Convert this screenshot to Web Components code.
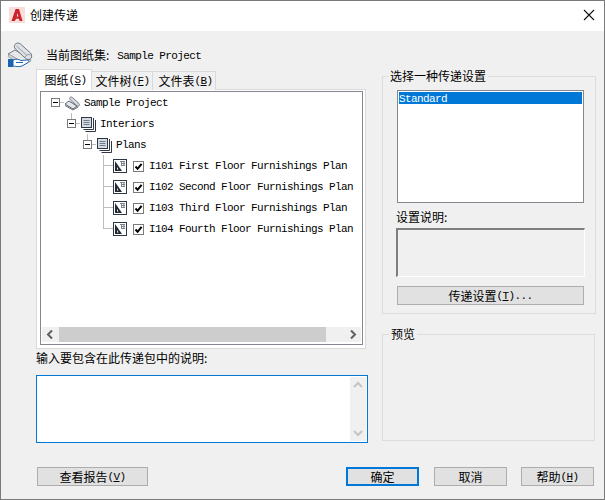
<!DOCTYPE html>
<html lang="zh">
<head>
<meta charset="utf-8">
<title>创建传递</title>
<style>
    html, body { margin: 0; padding: 0; background: #f0f0f0; }
    body { font: 12px/16px "Noto Sans CJK SC", "Liberation Sans", sans-serif; color: #000; }
</style>
</head>
<body>
<transmit-dialog>
    <title-bar slot="title">创建传递</title-bar>
    <sheet-header slot="header" set-name="Sample Project">当前图纸集:</sheet-header>

    <tab-strip slot="tabs">
        <tab-item active>图纸<mono-text>(<u>S</u>)</mono-text></tab-item>
        <tab-item style="width:62px;padding-left:1px">文件树<mono-text>(<u>F</u>)</mono-text></tab-item>
        <tab-item style="width:64px;padding-left:3px">文件表<mono-text>(<u>B</u>)</mono-text></tab-item>
    </tab-strip>

    <tree-view slot="tree">
        <tree-row depth="0" kind="set"><mono-text>Sample Project</mono-text></tree-row>
        <tree-row depth="1" kind="stack" branch><mono-text>Interiors</mono-text></tree-row>
        <tree-row depth="2" kind="stack" branch><mono-text>Plans</mono-text></tree-row>
        <tree-row leaf><mono-text>I101 First Floor Furnishings Plan</mono-text></tree-row>
        <tree-row leaf><mono-text>I102 Second Floor Furnishings Plan</mono-text></tree-row>
        <tree-row leaf><mono-text>I103 Third Floor Furnishings Plan</mono-text></tree-row>
        <tree-row leaf last><mono-text>I104 Fourth Floor Furnishings Plan</mono-text></tree-row>
    </tree-view>

    <notes-box slot="notes">输入要包含在此传递包中的说明:</notes-box>

    <group-box slot="settings" label="选择一种传递设置" style="height:246px;--legend-x:-9px">
        <setup-list><mono-text>Standard</mono-text></setup-list>
        <desc-box>设置说明:</desc-box>
        <win-button style="width:187px;margin-top:9px">传递设置<mono-text>(<u>T</u>)...</mono-text></win-button>
    </group-box>
    <group-box slot="preview" label="预览" style="height:115px;margin-top:12px;--legend-x:-8px"></group-box>

    <win-button slot="report" style="width:111px">查看报告<mono-text>(<u>V</u>)</mono-text></win-button>
    <win-button slot="ok" primary style="width:73px">确定</win-button>
    <win-button slot="cancel" style="width:73px;margin-left:15px">取消</win-button>
    <win-button slot="help" style="width:73px;margin-left:14px">帮助<mono-text>(<u>H</u>)</mono-text></win-button>
</transmit-dialog>

<script>
// Latin text in the dialog is a 6px per char mono face
class MonoText extends HTMLElement {
    constructor() {
        super();
        this.attachShadow({ mode: 'open' });
    }
    connectedCallback() {
        this.shadowRoot.innerHTML = `
            <style>
                :host { display: inline; font-family: "Liberation Mono", monospace; font-size: 11px; letter-spacing: -0.6px; }
            </style>
            <slot></slot>
        `;
    }
}
customElements.define('mono-text', MonoText);

class TransmitDialog extends HTMLElement {
    constructor() {
        super();
        this.attachShadow({ mode: 'open' });
    }
    connectedCallback() {
        this.shadowRoot.innerHTML = `
            <style>
                :host { display: block; box-sizing: border-box; width: 605px; height: 500px; border: 1px solid #7a7a7a; background: #f0f0f0; overflow: hidden; }
                .main { display: grid; grid-template-columns: 332px 213px; column-gap: 14px; padding-left: 35px; }
                .left { display: flex; flex-direction: column; }
                .footer { display: flex; margin-top: 24px; padding-left: 36px; }
                .spacer { flex: 1; }
                .footer-right { display: flex; margin-right: 10px; }
            </style>
            <slot name="title"></slot>
            <slot name="header"></slot>
            <div class="main">
                <div class="left">
                    <slot name="tabs"></slot>
                    <slot name="tree"></slot>
                    <slot name="notes"></slot>
                </div>
                <div class="right">
                    <slot name="settings"></slot>
                    <slot name="preview"></slot>
                </div>
            </div>
            <div class="footer">
                <slot name="report"></slot>
                <div class="spacer"></div>
                <div class="footer-right">
                    <slot name="ok"></slot>
                    <slot name="cancel"></slot>
                    <slot name="help"></slot>
                </div>
            </div>
        `;
    }
}
customElements.define('transmit-dialog', TransmitDialog);

class TitleBar extends HTMLElement {
    constructor() {
        super();
        this.attachShadow({ mode: 'open' });
    }
    connectedCallback() {
        this.shadowRoot.innerHTML = `
            <style>
                :host { display: flex; box-sizing: border-box; align-items: center; height: 30px; background: #fff; padding: 0 9px 2px 8px; }
                .logo { width: 16px; height: 16px; flex: none; }
                .text { margin-left: 5px; flex: 1; }
                .close { width: 12px; height: 12px; flex: none; }
            </style>
            <svg class="logo" viewBox="0 0 16 16">
                <rect width="16" height="16" fill="#fadcd8"/>
                <path d="M2.5 14 L6.6 2 H10 L13.5 14 H10.6 L10 11.8 H6.9 L6 14 Z M7.7 9.4 H9.4 L8.6 6 Z" fill="#c8232f" fill-rule="evenodd"/>
            </svg>
            <div class="text"><slot></slot></div>
            <svg class="close" viewBox="0 0 12 12"><path d="M1 1 L11 11 M11 1 L1 11" stroke="#111" stroke-width="1.1" fill="none"/></svg>
        `;
    }
}
customElements.define('title-bar', TitleBar);

class SheetHeader extends HTMLElement {
    constructor() {
        super();
        this.attachShadow({ mode: 'open' });
    }
    connectedCallback() {
        this.shadowRoot.innerHTML = `
            <style>
                :host { display: flex; align-items: center; height: 26px; padding: 11px 0 0 6px; }
                svg { width: 26px; height: 26px; flex: none; margin-right: 13px; }
                .name { width: 180px; margin-left: 8px; white-space: nowrap; }
            </style>
            <svg viewBox="0 0 26 26">
                <path d="M1 12 L8 8 L23 17 L16 21 Z" fill="#e8e8e8" stroke="#6f7680"/>
                <path d="M1 14.5 L2 12 L16 20.5 L23 17 L24 19 L15 23.5 L9 20 Z" fill="#c9ced4" stroke="#8a9099" stroke-width=".7"/>
                <path d="M8 2.5 C9.5 .5 12 .8 13.5 2 L23.5 11 C25.5 13.5 25 17 22 17.5 C20 17.8 18.5 16 17 15 L8.5 7 C7 5.5 7 4 8 2.5 Z" fill="#dfe2e6" stroke="#6f7680"/>
                <path d="M9.5 4 L20 13.5 M18 15 C19 12.8 21.5 12 23.5 13" fill="none" stroke="#9aa0a8"/>
                <path d="M1 17 H6 V25 H1 Z" fill="#1d63b0"/>
                <path d="M6 18 C9 16.5 12 17.5 14 18.5 L20 18 C22 18 22.5 19.5 21 20.5 L15 24 C12 25 9 24.5 6 24 Z" fill="#fff" stroke="#1d63b0"/>
                <path d="M9 20.5 H16" stroke="#1d63b0" fill="none"/>
            </svg>
            <div class="label"><slot></slot></div>
            <div class="name"><mono-text>${this.getAttribute('set-name')}</mono-text></div>
        `;
    }
}
customElements.define('sheet-header', SheetHeader);

class TabStrip extends HTMLElement {
    constructor() {
        super();
        this.attachShadow({ mode: 'open' });
    }
    connectedCallback() {
        this.shadowRoot.innerHTML = `
            <style>
                :host { display: flex; align-items: flex-start; height: 20px; margin-top: 1px; position: relative; z-index: 1; }
            </style>
            <slot></slot>
        `;
    }
}
customElements.define('tab-strip', TabStrip);

class TabItem extends HTMLElement {
    constructor() {
        super();
        this.attachShadow({ mode: 'open' });
    }
    connectedCallback() {
        this.shadowRoot.innerHTML = `
            <style>
                :host { display: flex; box-sizing: border-box; align-items: center; justify-content: center; height: 19px; margin-top: 2px; margin-left: -1px; border: 1px solid #d9d9d9; border-bottom: 0; background: #f0f0f0; white-space: nowrap; }
                :host([active]) { width: 56px; height: 21px; margin-top: 0; margin-left: 0; padding-left: 3px; background: #fff; position: relative; z-index: 2; }
            </style>
            <slot></slot>
        `;
    }
}
customElements.define('tab-item', TabItem);

class TreeView extends HTMLElement {
    constructor() {
        super();
        this.attachShadow({ mode: 'open' });
    }
    connectedCallback() {
        this.shadowRoot.innerHTML = `
            <style>
                :host { display: block; box-sizing: border-box; width: 330px; height: 260px; border: 1px solid #d9d9d9; background: #fff; padding: 1px 2px 3px 3px; }
                .inner { box-sizing: border-box; height: 100%; border: 1px solid #828790; padding: 0 1px 1px; display: flex; flex-direction: column; }
                .rows { flex: 1; overflow: hidden; white-space: nowrap; }
                .hbar { display: flex; align-items: center; height: 15px; margin-bottom: 1px; background: #f0f0f0; flex: none; }
                .thumb { width: 267px; height: 15px; margin-left: 1px; background: #cdcdcd; }
                .arrow { width: 16px; height: 15px; flex: none; }
                .fill { flex: 1; }
            </style>
            <div class="inner">
                <div class="rows"><slot></slot></div>
                <div class="hbar">
                    <svg class="arrow" viewBox="0 0 16 15"><path d="M10 3.5 L6 7.5 L10 11.5" fill="none" stroke="#606060" stroke-width="2"/></svg>
                    <div class="thumb"></div>
                    <div class="fill"></div>
                    <svg class="arrow" viewBox="0 0 16 15"><path d="M6 3.5 L10 7.5 L6 11.5" fill="none" stroke="#606060" stroke-width="2"/></svg>
                </div>
            </div>
        `;
    }
}
customElements.define('tree-view', TreeView);

const TREE_ICONS = {
    set: `<svg class="icon" viewBox="0 0 16 16">
            <path d="M1 9 L5 6 L13 11 L9 14 Z" fill="#e6e6e6" stroke="#5d6570"/>
            <path d="M1 10.5 L9 15 L14 12" fill="none" stroke="#5d6570"/>
            <path d="M6 2.5 C7 1.5 8 2 9 3 L15 8.5 C16 10 15 12 13 11 L6.5 5 C5.5 4 5.4 3.2 6 2.5 Z" fill="#d5d8dc" stroke="#5d6570" stroke-width=".8"/>
        </svg>`,
    stack: `<svg class="icon" viewBox="0 0 16 16">
            <path d="M5.5 15.5 H15.5 V4" fill="none" stroke="#2f3743"/>
            <path d="M3.5 13.5 H13.5 V2" fill="none" stroke="#2f3743"/>
            <rect x="1.5" y="1.5" width="10" height="10" fill="#d5dbe2" stroke="#2f3743"/>
            <path d="M3.5 4.5 H9.5 M3.5 6.5 H9.5 M3.5 8.5 H9.5" stroke="#6f7c8c"/>
        </svg>`,
    sheet: `<svg class="icon sheet" viewBox="0 0 14 14">
            <rect x=".5" y=".5" width="13" height="13" fill="#fff" stroke="#2f3743"/>
            <path d="M2 2 L9 12 H2 Z" fill="#232a35"/>
            <path d="M4 8 L5.5 10.5 H4 Z" fill="#fff"/>
            <path d="M8.5 2 V7 M11 2 V7 M7 2.5 H12 M8 4.5 H12 M9 6.5 H12" stroke="#7a828c" fill="none"/>
        </svg>`
};

class TreeRow extends HTMLElement {
    constructor() {
        super();
        this.attachShadow({ mode: 'open' });
    }
    connectedCallback() {
        const leaf = this.hasAttribute('leaf');
        const depth = Number(this.getAttribute('depth') || 0);
        const icon = TREE_ICONS[leaf ? 'sheet' : this.getAttribute('kind')];
        const lead = leaf
            ? `<div class="vline"></div><div class="hline"></div>${icon}<svg class="check" viewBox="0 0 11 11"><rect x=".5" y=".5" width="10" height="10" fill="#fff" stroke="#7a7a7a"/><path d="M2.5 5.5 L4.6 7.8 L8.6 2.8" fill="none" stroke="#000" stroke-width="2"/></svg>`
            : `<div class="up"></div><svg class="exp" viewBox="0 0 9 9"><rect x=".5" y=".5" width="8" height="8" fill="#fff" stroke="#7a7a7a"/><path d="M2 4.5 H7" stroke="#000"/></svg><div class="dash"></div>${icon}`;
        this.shadowRoot.innerHTML = `
            <style>
                :host { display: flex; align-items: center; height: 21px; position: relative; padding-left: ${leaf ? 71 : 9 + depth * 16}px; }
                .icon { width: 16px; height: 16px; flex: none; margin-right: 4px; }
                .icon.sheet { width: 14px; height: 14px; margin-right: 6px; }
                .exp { width: 9px; height: 9px; flex: none; }
                .dash { width: 4px; height: 1px; background: #bdbdbd; flex: none; }
                .check { width: 11px; height: 11px; flex: none; margin: 1px 5px 0 0; }
                .up { position: absolute; left: ${13 + depth * 16}px; top: 0; width: 1px; height: 6px; background: #bdbdbd; }
                .vline { position: absolute; left: 61px; top: 0; width: 1px; height: ${this.hasAttribute('last') ? 11 : 21}px; background: #bdbdbd; }
                .hline { position: absolute; left: 61px; top: 10px; width: 10px; height: 1px; background: #bdbdbd; }
            </style>
            ${depth === 0 && !leaf ? lead.replace('<div class="up"></div>', '') : lead}
            <slot></slot>
        `;
    }
}
customElements.define('tree-row', TreeRow);

class NotesBox extends HTMLElement {
    constructor() {
        super();
        this.attachShadow({ mode: 'open' });
    }
    connectedCallback() {
        this.shadowRoot.innerHTML = `
            <style>
                :host { display: block; }
                .label { height: 16px; margin-top: 1px; }
                .box { box-sizing: border-box; height: 68px; margin-top: 9px; width: 332px; border: 1px solid #0078d7; background: #fff; display: flex; justify-content: flex-end; padding: 1px; }
                .vbar { width: 16px; background: #f0f0f0; display: flex; flex-direction: column; justify-content: space-between; }
                svg { width: 16px; height: 15px; display: block; }
            </style>
            <div class="label"><slot></slot></div>
            <div class="box">
                <div class="vbar">
                    <svg viewBox="0 0 16 15"><path d="M4 10 L8 6 L12 10" fill="none" stroke="#c4c4c4" stroke-width="2"/></svg>
                    <svg viewBox="0 0 16 15"><path d="M4 5 L8 9 L12 5" fill="none" stroke="#c4c4c4" stroke-width="2"/></svg>
                </div>
            </div>
        `;
    }
}
customElements.define('notes-box', NotesBox);

class GroupBox extends HTMLElement {
    constructor() {
        super();
        this.attachShadow({ mode: 'open' });
    }
    connectedCallback() {
        this.shadowRoot.innerHTML = `
            <style>
                :host { display: block; }
                fieldset { box-sizing: border-box; height: 100%; margin: 0; padding: 6px 10px 0 14px; border: 1px solid #dcdcdc; border-radius: 0; }
                legend { padding: 0 2px; margin-left: var(--legend-x, 0); line-height: 16px; }
            </style>
            <fieldset>
                <legend>${this.getAttribute('label')}</legend>
                <slot></slot>
            </fieldset>
        `;
    }
}
customElements.define('group-box', GroupBox);

class SetupList extends HTMLElement {
    constructor() {
        super();
        this.attachShadow({ mode: 'open' });
    }
    connectedCallback() {
        this.shadowRoot.innerHTML = `
            <style>
                :host { display: block; box-sizing: border-box; width: 187px; height: 113px; border: 1px solid #828790; background: #fff; padding: 1px; }
                .row { height: 12px; line-height: 10px; background: #0078d7; color: #fff; }
            </style>
            <div class="row"><slot></slot></div>
        `;
    }
}
customElements.define('setup-list', SetupList);

class DescBox extends HTMLElement {
    constructor() {
        super();
        this.attachShadow({ mode: 'open' });
    }
    connectedCallback() {
        this.shadowRoot.innerHTML = `
            <style>
                :host { display: block; margin: 6px 0 0 -1px; }
                .label { height: 16px; }
                .box { box-sizing: border-box; width: 189px; height: 49px; margin-top: 3px; border: 1px solid; border-width: 2px 1px 1px 2px; border-color: #7e7e7e #fff #fff #7e7e7e; background: #f0f0f0; }
            </style>
            <div class="label"><slot></slot></div>
            <div class="box"></div>
        `;
    }
}
customElements.define('desc-box', DescBox);

class WinButton extends HTMLElement {
    constructor() {
        super();
        this.attachShadow({ mode: 'open' });
    }
    connectedCallback() {
        this.shadowRoot.innerHTML = `
            <style>
                :host { display: flex; box-sizing: border-box; align-items: center; justify-content: center; height: 19px; border: 1px solid #adadad; background: #e1e1e1; white-space: nowrap; }
                :host([primary]) { border: 2px solid #0078d7; }
            </style>
            <slot></slot>
        `;
    }
}
customElements.define('win-button', WinButton);
</script>
</body>
</html>
